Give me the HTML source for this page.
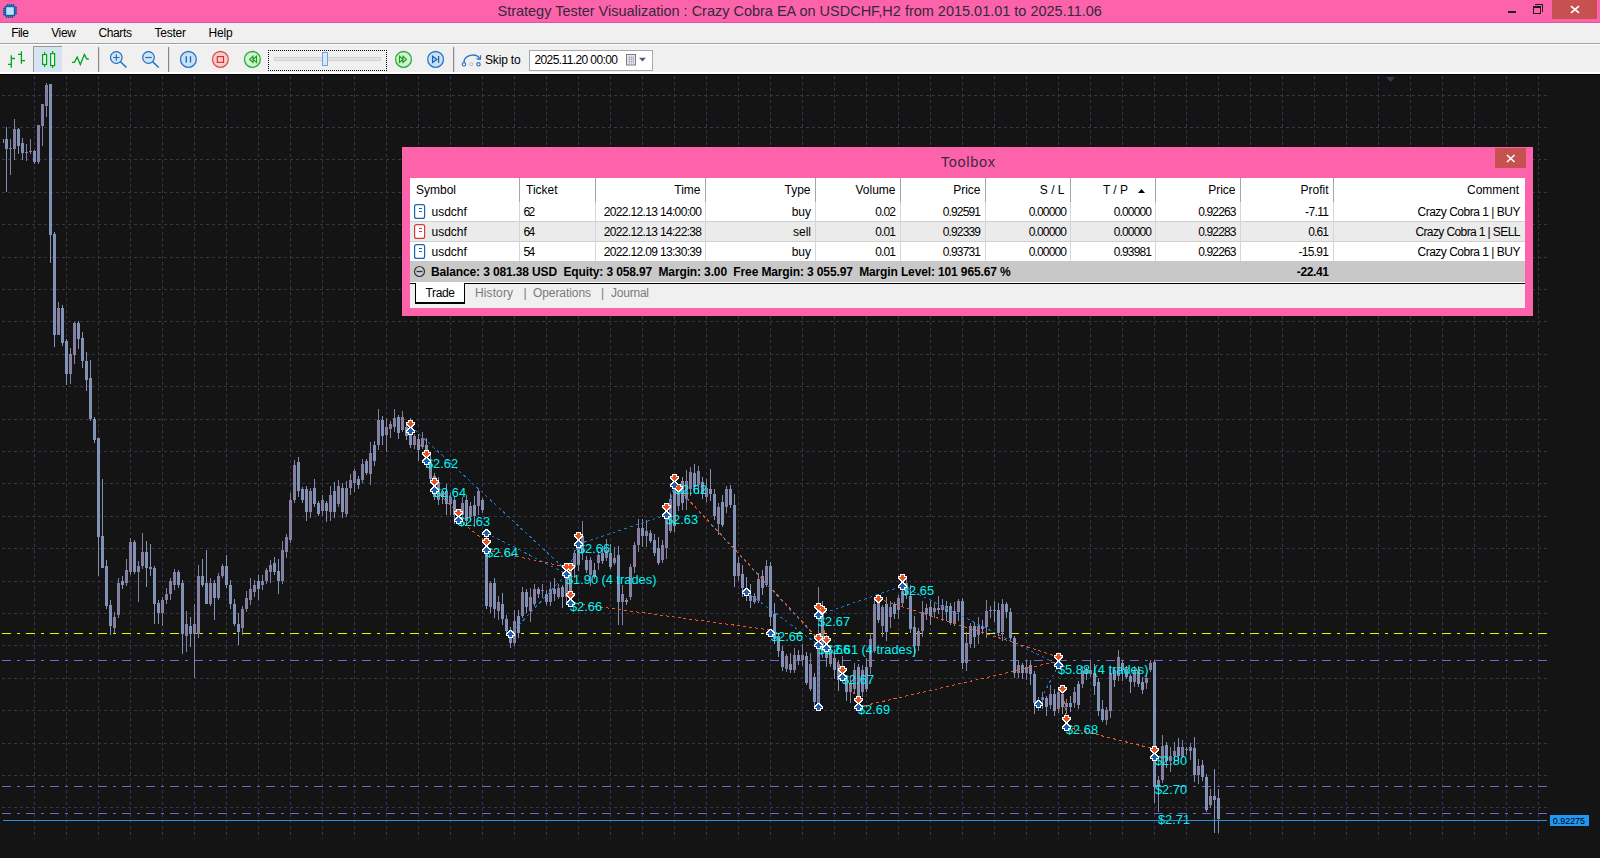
<!DOCTYPE html>
<html><head><meta charset="utf-8">
<style>
*{box-sizing:border-box}
html,body{margin:0;padding:0;width:1600px;height:858px;overflow:hidden;background:#141414;font-family:"Liberation Sans",sans-serif}
.abs{position:absolute}
.tx{position:absolute;white-space:pre;line-height:1}
#title{left:0;top:0;width:1600px;height:23px;background:#fd63ab;border-bottom:1px solid #d9579a}
#menu{left:0;top:23px;width:1600px;height:21px;background:#f0f0f0;border-bottom:1px solid #a0a0a0}
#tb{left:0;top:44px;width:1600px;height:28px;background:#f0f0f0;border-top:1px solid #fff}
#chartedge{left:0;top:72px;width:1600px;height:2px;background:#fff}
#chartline{left:0;top:74px;width:1600px;height:1px;background:#000}
#chart{left:0;top:75px;width:1600px;height:783px;background:#141414}
#box{left:402px;top:147px;width:1131px;height:169px;background:#fd63ab}
#panel{left:410px;top:178px;width:1115px;height:130px;background:#fff}
</style></head><body>
<div id="title" class="abs"></div>
<div id="menu" class="abs"></div>
<div id="tb" class="abs"></div>
<div id="chartedge" class="abs"></div>
<div id="chartline" class="abs"></div>
<div id="chart" class="abs"><svg width="1600" height="783" viewBox="0 0 1600 783" style="display:block"><g stroke="#37334d" stroke-width="1" stroke-dasharray="3 3"><line x1="34.5" y1="1" x2="34.5" y2="764"/><line x1="66.5" y1="1" x2="66.5" y2="764"/><line x1="98.5" y1="1" x2="98.5" y2="764"/><line x1="130.5" y1="1" x2="130.5" y2="764"/><line x1="162.5" y1="1" x2="162.5" y2="764"/><line x1="194.5" y1="1" x2="194.5" y2="764"/><line x1="226.5" y1="1" x2="226.5" y2="764"/><line x1="258.5" y1="1" x2="258.5" y2="764"/><line x1="290.5" y1="1" x2="290.5" y2="764"/><line x1="322.5" y1="1" x2="322.5" y2="764"/><line x1="354.5" y1="1" x2="354.5" y2="764"/><line x1="386.5" y1="1" x2="386.5" y2="764"/><line x1="418.5" y1="1" x2="418.5" y2="764"/><line x1="450.5" y1="1" x2="450.5" y2="764"/><line x1="482.5" y1="1" x2="482.5" y2="764"/><line x1="514.5" y1="1" x2="514.5" y2="764"/><line x1="546.5" y1="1" x2="546.5" y2="764"/><line x1="578.5" y1="1" x2="578.5" y2="764"/><line x1="610.5" y1="1" x2="610.5" y2="764"/><line x1="642.5" y1="1" x2="642.5" y2="764"/><line x1="674.5" y1="1" x2="674.5" y2="764"/><line x1="706.5" y1="1" x2="706.5" y2="764"/><line x1="738.5" y1="1" x2="738.5" y2="764"/><line x1="770.5" y1="1" x2="770.5" y2="764"/><line x1="802.5" y1="1" x2="802.5" y2="764"/><line x1="834.5" y1="1" x2="834.5" y2="764"/><line x1="866.5" y1="1" x2="866.5" y2="764"/><line x1="898.5" y1="1" x2="898.5" y2="764"/><line x1="930.5" y1="1" x2="930.5" y2="764"/><line x1="962.5" y1="1" x2="962.5" y2="764"/><line x1="994.5" y1="1" x2="994.5" y2="764"/><line x1="1026.5" y1="1" x2="1026.5" y2="764"/><line x1="1058.5" y1="1" x2="1058.5" y2="764"/><line x1="1090.5" y1="1" x2="1090.5" y2="764"/><line x1="1122.5" y1="1" x2="1122.5" y2="764"/><line x1="1154.5" y1="1" x2="1154.5" y2="764"/><line x1="1186.5" y1="1" x2="1186.5" y2="764"/><line x1="1218.5" y1="1" x2="1218.5" y2="764"/><line x1="1250.5" y1="1" x2="1250.5" y2="764"/><line x1="1282.5" y1="1" x2="1282.5" y2="764"/><line x1="1314.5" y1="1" x2="1314.5" y2="764"/><line x1="1346.5" y1="1" x2="1346.5" y2="764"/><line x1="1378.5" y1="1" x2="1378.5" y2="764"/><line x1="1410.5" y1="1" x2="1410.5" y2="764"/><line x1="1442.5" y1="1" x2="1442.5" y2="764"/><line x1="1474.5" y1="1" x2="1474.5" y2="764"/><line x1="1506.5" y1="1" x2="1506.5" y2="764"/><line x1="1538.5" y1="1" x2="1538.5" y2="764"/><line x1="2" y1="20.5" x2="1548" y2="20.5"/><line x1="2" y1="52.5" x2="1548" y2="52.5"/><line x1="2" y1="84.5" x2="1548" y2="84.5"/><line x1="2" y1="117.5" x2="1548" y2="117.5"/><line x1="2" y1="149.5" x2="1548" y2="149.5"/><line x1="2" y1="182.5" x2="1548" y2="182.5"/><line x1="2" y1="214.5" x2="1548" y2="214.5"/><line x1="2" y1="246.5" x2="1548" y2="246.5"/><line x1="2" y1="279.5" x2="1548" y2="279.5"/><line x1="2" y1="311.5" x2="1548" y2="311.5"/><line x1="2" y1="344.5" x2="1548" y2="344.5"/><line x1="2" y1="376.5" x2="1548" y2="376.5"/><line x1="2" y1="408.5" x2="1548" y2="408.5"/><line x1="2" y1="441.5" x2="1548" y2="441.5"/><line x1="2" y1="473.5" x2="1548" y2="473.5"/><line x1="2" y1="506.5" x2="1548" y2="506.5"/><line x1="2" y1="538.5" x2="1548" y2="538.5"/><line x1="2" y1="570.5" x2="1548" y2="570.5"/><line x1="2" y1="603.5" x2="1548" y2="603.5"/><line x1="2" y1="635.5" x2="1548" y2="635.5"/><line x1="2" y1="668.5" x2="1548" y2="668.5"/><line x1="2" y1="700.5" x2="1548" y2="700.5"/><line x1="2" y1="732.5" x2="1548" y2="732.5"/></g><g stroke-width="1" stroke-dasharray="9 6 3 6"><line x1="2" y1="558.5" x2="1548" y2="558.5" stroke="#f0f000"/><line x1="2" y1="585.5" x2="1548" y2="585.5" stroke="#7462d6"/><line x1="2" y1="711.5" x2="1548" y2="711.5" stroke="#7462d6"/><line x1="2" y1="738.5" x2="1548" y2="738.5" stroke="#7462d6"/></g><defs><clipPath id="cc"><rect x="3" y="0" width="1545" height="783"/></clipPath></defs><g clip-path="url(#cc)"><g fill="#857fa2"><rect x="10" y="64" width="1" height="36"/><rect x="9" y="73" width="3" height="1"/><rect x="14" y="44" width="1" height="41"/><rect x="13" y="54" width="3" height="20"/><rect x="26" y="69" width="1" height="17"/><rect x="25" y="77" width="3" height="1"/><rect x="30" y="64" width="1" height="15"/><rect x="29" y="76" width="3" height="1"/><rect x="38" y="50" width="1" height="39"/><rect x="37" y="50" width="3" height="37"/><rect x="42" y="29" width="1" height="42"/><rect x="41" y="29" width="3" height="22"/><rect x="46" y="8" width="1" height="34"/><rect x="45" y="10" width="3" height="21"/><rect x="58" y="227" width="1" height="33"/><rect x="57" y="233" width="3" height="27"/><rect x="70" y="273" width="1" height="36"/><rect x="69" y="279" width="3" height="20"/><rect x="74" y="247" width="1" height="42"/><rect x="73" y="248" width="3" height="32"/><rect x="114" y="537" width="1" height="21"/><rect x="113" y="542" width="3" height="11"/><rect x="118" y="503" width="1" height="40"/><rect x="117" y="508" width="3" height="32"/><rect x="126" y="484" width="1" height="27"/><rect x="125" y="495" width="3" height="13"/><rect x="130" y="463" width="1" height="37"/><rect x="129" y="467" width="3" height="30"/><rect x="138" y="486" width="1" height="41"/><rect x="137" y="491" width="3" height="6"/><rect x="142" y="458" width="1" height="36"/><rect x="141" y="477" width="3" height="14"/><rect x="162" y="522" width="1" height="29"/><rect x="161" y="525" width="3" height="13"/><rect x="166" y="513" width="1" height="16"/><rect x="165" y="519" width="3" height="6"/><rect x="170" y="503" width="1" height="22"/><rect x="169" y="506" width="3" height="13"/><rect x="174" y="494" width="1" height="21"/><rect x="173" y="497" width="3" height="13"/><rect x="186" y="536" width="1" height="41"/><rect x="185" y="549" width="3" height="12"/><rect x="194" y="529" width="1" height="74"/><rect x="193" y="549" width="3" height="10"/><rect x="198" y="490" width="1" height="73"/><rect x="197" y="501" width="3" height="58"/><rect x="210" y="503" width="1" height="28"/><rect x="209" y="508" width="3" height="21"/><rect x="218" y="498" width="1" height="27"/><rect x="217" y="501" width="3" height="22"/><rect x="222" y="489" width="1" height="14"/><rect x="221" y="491" width="3" height="10"/><rect x="242" y="531" width="1" height="29"/><rect x="241" y="534" width="3" height="19"/><rect x="246" y="516" width="1" height="21"/><rect x="245" y="523" width="3" height="11"/><rect x="250" y="503" width="1" height="27"/><rect x="249" y="514" width="3" height="11"/><rect x="254" y="505" width="1" height="17"/><rect x="253" y="510" width="3" height="7"/><rect x="262" y="500" width="1" height="15"/><rect x="261" y="506" width="3" height="4"/><rect x="266" y="493" width="1" height="16"/><rect x="265" y="495" width="3" height="11"/><rect x="270" y="485" width="1" height="23"/><rect x="269" y="490" width="3" height="7"/><rect x="282" y="466" width="1" height="43"/><rect x="281" y="475" width="3" height="31"/><rect x="286" y="459" width="1" height="24"/><rect x="285" y="462" width="3" height="15"/><rect x="290" y="418" width="1" height="50"/><rect x="289" y="425" width="3" height="40"/><rect x="294" y="385" width="1" height="43"/><rect x="293" y="390" width="3" height="35"/><rect x="310" y="413" width="1" height="30"/><rect x="309" y="416" width="3" height="21"/><rect x="322" y="420" width="1" height="21"/><rect x="321" y="425" width="3" height="11"/><rect x="330" y="411" width="1" height="35"/><rect x="329" y="420" width="3" height="17"/><rect x="338" y="405" width="1" height="27"/><rect x="337" y="411" width="3" height="18"/><rect x="346" y="406" width="1" height="36"/><rect x="345" y="413" width="3" height="26"/><rect x="350" y="399" width="1" height="21"/><rect x="349" y="405" width="3" height="8"/><rect x="354" y="394" width="1" height="23"/><rect x="353" y="396" width="3" height="12"/><rect x="362" y="384" width="1" height="24"/><rect x="361" y="389" width="3" height="16"/><rect x="370" y="367" width="1" height="43"/><rect x="369" y="378" width="3" height="21"/><rect x="378" y="334" width="1" height="41"/><rect x="377" y="345" width="3" height="25"/><rect x="386" y="343" width="1" height="34"/><rect x="385" y="352" width="3" height="8"/><rect x="390" y="346" width="1" height="17"/><rect x="389" y="349" width="3" height="5"/><rect x="394" y="334" width="1" height="23"/><rect x="393" y="343" width="3" height="9"/><rect x="402" y="336" width="1" height="21"/><rect x="401" y="342" width="3" height="13"/><rect x="414" y="359" width="1" height="15"/><rect x="413" y="361" width="3" height="9"/><rect x="422" y="357" width="1" height="17"/><rect x="421" y="363" width="3" height="9"/><rect x="438" y="402" width="1" height="28"/><rect x="437" y="407" width="3" height="18"/><rect x="450" y="418" width="1" height="22"/><rect x="449" y="422" width="3" height="7"/><rect x="462" y="422" width="1" height="23"/><rect x="461" y="428" width="3" height="12"/><rect x="470" y="427" width="1" height="20"/><rect x="469" y="431" width="3" height="11"/><rect x="478" y="413" width="1" height="27"/><rect x="477" y="416" width="3" height="15"/><rect x="490" y="506" width="1" height="32"/><rect x="489" y="508" width="3" height="24"/><rect x="498" y="521" width="1" height="24"/><rect x="497" y="527" width="3" height="9"/><rect x="514" y="535" width="1" height="36"/><rect x="513" y="546" width="3" height="22"/><rect x="522" y="512" width="1" height="31"/><rect x="521" y="517" width="3" height="24"/><rect x="530" y="513" width="1" height="34"/><rect x="529" y="522" width="3" height="14"/><rect x="534" y="509" width="1" height="22"/><rect x="533" y="514" width="3" height="15"/><rect x="542" y="509" width="1" height="14"/><rect x="541" y="515" width="3" height="1"/><rect x="550" y="507" width="1" height="24"/><rect x="549" y="514" width="3" height="13"/><rect x="558" y="509" width="1" height="15"/><rect x="557" y="513" width="3" height="9"/><rect x="566" y="492" width="1" height="36"/><rect x="565" y="499" width="3" height="23"/><rect x="574" y="475" width="1" height="28"/><rect x="573" y="478" width="3" height="14"/><rect x="582" y="446" width="1" height="39"/><rect x="581" y="461" width="3" height="17"/><rect x="590" y="482" width="1" height="29"/><rect x="589" y="485" width="3" height="15"/><rect x="598" y="476" width="1" height="19"/><rect x="597" y="480" width="3" height="8"/><rect x="606" y="464" width="1" height="22"/><rect x="605" y="475" width="3" height="8"/><rect x="614" y="472" width="1" height="18"/><rect x="613" y="483" width="3" height="5"/><rect x="622" y="510" width="1" height="40"/><rect x="621" y="519" width="3" height="8"/><rect x="630" y="489" width="1" height="36"/><rect x="629" y="492" width="3" height="30"/><rect x="634" y="467" width="1" height="31"/><rect x="633" y="470" width="3" height="22"/><rect x="638" y="444" width="1" height="33"/><rect x="637" y="453" width="3" height="17"/><rect x="646" y="445" width="1" height="27"/><rect x="645" y="456" width="3" height="5"/><rect x="662" y="465" width="1" height="23"/><rect x="661" y="470" width="3" height="15"/><rect x="666" y="430" width="1" height="54"/><rect x="665" y="441" width="3" height="32"/><rect x="670" y="418" width="1" height="40"/><rect x="669" y="424" width="3" height="32"/><rect x="678" y="410" width="1" height="26"/><rect x="677" y="414" width="3" height="17"/><rect x="686" y="395" width="1" height="40"/><rect x="685" y="406" width="3" height="18"/><rect x="690" y="392" width="1" height="29"/><rect x="689" y="397" width="3" height="17"/><rect x="698" y="391" width="1" height="28"/><rect x="697" y="396" width="3" height="14"/><rect x="706" y="404" width="1" height="23"/><rect x="705" y="413" width="3" height="9"/><rect x="718" y="428" width="1" height="32"/><rect x="717" y="432" width="3" height="17"/><rect x="726" y="411" width="1" height="27"/><rect x="725" y="414" width="3" height="18"/><rect x="738" y="482" width="1" height="24"/><rect x="737" y="488" width="3" height="13"/><rect x="754" y="518" width="1" height="11"/><rect x="753" y="521" width="3" height="6"/><rect x="758" y="498" width="1" height="30"/><rect x="757" y="504" width="3" height="22"/><rect x="766" y="485" width="1" height="27"/><rect x="765" y="491" width="3" height="19"/><rect x="786" y="579" width="1" height="18"/><rect x="785" y="581" width="3" height="13"/><rect x="794" y="573" width="1" height="25"/><rect x="793" y="580" width="3" height="15"/><rect x="802" y="569" width="1" height="22"/><rect x="801" y="580" width="3" height="5"/><rect x="810" y="578" width="1" height="38"/><rect x="809" y="589" width="3" height="25"/><rect x="818" y="512" width="1" height="121"/><rect x="817" y="567" width="3" height="63"/><rect x="822" y="526" width="1" height="57"/><rect x="821" y="532" width="3" height="44"/><rect x="830" y="571" width="1" height="21"/><rect x="829" y="576" width="3" height="13"/><rect x="842" y="581" width="1" height="26"/><rect x="841" y="592" width="3" height="10"/><rect x="850" y="601" width="1" height="27"/><rect x="849" y="608" width="3" height="9"/><rect x="854" y="588" width="1" height="31"/><rect x="853" y="595" width="3" height="19"/><rect x="862" y="590" width="1" height="32"/><rect x="861" y="595" width="3" height="22"/><rect x="870" y="558" width="1" height="41"/><rect x="869" y="564" width="3" height="28"/><rect x="874" y="523" width="1" height="55"/><rect x="873" y="529" width="3" height="47"/><rect x="882" y="530" width="1" height="32"/><rect x="881" y="532" width="3" height="19"/><rect x="890" y="526" width="1" height="27"/><rect x="889" y="532" width="3" height="10"/><rect x="898" y="520" width="1" height="24"/><rect x="897" y="523" width="3" height="12"/><rect x="902" y="514" width="1" height="18"/><rect x="901" y="516" width="3" height="12"/><rect x="906" y="501" width="1" height="23"/><rect x="905" y="508" width="3" height="12"/><rect x="918" y="553" width="1" height="23"/><rect x="917" y="556" width="3" height="15"/><rect x="922" y="526" width="1" height="36"/><rect x="921" y="537" width="3" height="19"/><rect x="926" y="529" width="1" height="16"/><rect x="925" y="533" width="3" height="6"/><rect x="934" y="528" width="1" height="15"/><rect x="933" y="533" width="3" height="4"/><rect x="942" y="524" width="1" height="22"/><rect x="941" y="530" width="3" height="5"/><rect x="954" y="527" width="1" height="24"/><rect x="953" y="536" width="3" height="13"/><rect x="958" y="524" width="1" height="22"/><rect x="957" y="526" width="3" height="11"/><rect x="966" y="557" width="1" height="39"/><rect x="965" y="568" width="3" height="20"/><rect x="970" y="548" width="1" height="25"/><rect x="969" y="551" width="3" height="18"/><rect x="978" y="542" width="1" height="27"/><rect x="977" y="551" width="3" height="9"/><rect x="986" y="525" width="1" height="38"/><rect x="985" y="536" width="3" height="16"/><rect x="990" y="531" width="1" height="12"/><rect x="989" y="535" width="3" height="1"/><rect x="1002" y="524" width="1" height="42"/><rect x="1001" y="529" width="3" height="28"/><rect x="1018" y="586" width="1" height="17"/><rect x="1017" y="590" width="3" height="8"/><rect x="1026" y="585" width="1" height="20"/><rect x="1025" y="592" width="3" height="6"/><rect x="1038" y="622" width="1" height="14"/><rect x="1037" y="625" width="3" height="5"/><rect x="1042" y="617" width="1" height="17"/><rect x="1041" y="622" width="3" height="3"/><rect x="1050" y="610" width="1" height="24"/><rect x="1049" y="619" width="3" height="11"/><rect x="1058" y="612" width="1" height="26"/><rect x="1057" y="617" width="3" height="17"/><rect x="1066" y="624" width="1" height="15"/><rect x="1065" y="628" width="3" height="4"/><rect x="1074" y="612" width="1" height="21"/><rect x="1073" y="617" width="3" height="11"/><rect x="1082" y="591" width="1" height="22"/><rect x="1081" y="596" width="3" height="13"/><rect x="1090" y="586" width="1" height="16"/><rect x="1089" y="595" width="3" height="4"/><rect x="1106" y="632" width="1" height="18"/><rect x="1105" y="635" width="3" height="10"/><rect x="1110" y="591" width="1" height="52"/><rect x="1109" y="598" width="3" height="38"/><rect x="1118" y="575" width="1" height="31"/><rect x="1117" y="582" width="3" height="19"/><rect x="1134" y="591" width="1" height="21"/><rect x="1133" y="595" width="3" height="12"/><rect x="1146" y="599" width="1" height="15"/><rect x="1145" y="603" width="3" height="5"/><rect x="1150" y="585" width="1" height="12"/><rect x="1149" y="588" width="3" height="7"/><rect x="1158" y="701" width="1" height="36"/><rect x="1157" y="705" width="3" height="7"/><rect x="1162" y="660" width="1" height="48"/><rect x="1161" y="671" width="3" height="34"/><rect x="1170" y="672" width="1" height="25"/><rect x="1169" y="681" width="3" height="5"/><rect x="1174" y="667" width="1" height="21"/><rect x="1173" y="676" width="3" height="5"/><rect x="1182" y="665" width="1" height="18"/><rect x="1181" y="672" width="3" height="9"/><rect x="1190" y="668" width="1" height="17"/><rect x="1189" y="672" width="3" height="4"/><rect x="1198" y="684" width="1" height="25"/><rect x="1197" y="691" width="3" height="9"/><rect x="1210" y="714" width="1" height="19"/><rect x="1209" y="721" width="3" height="9"/></g><g fill="#8292b6"><rect x="2" y="64" width="1" height="4"/><rect x="1" y="64" width="3" height="4"/><rect x="6" y="52" width="1" height="65"/><rect x="5" y="64" width="3" height="10"/><rect x="18" y="53" width="1" height="26"/><rect x="17" y="54" width="3" height="17"/><rect x="22" y="63" width="1" height="22"/><rect x="21" y="68" width="3" height="10"/><rect x="34" y="75" width="1" height="14"/><rect x="33" y="76" width="3" height="11"/><rect x="50" y="9" width="1" height="179"/><rect x="49" y="9" width="3" height="151"/><rect x="54" y="157" width="1" height="115"/><rect x="53" y="159" width="3" height="101"/><rect x="62" y="230" width="1" height="41"/><rect x="61" y="233" width="3" height="35"/><rect x="66" y="264" width="1" height="46"/><rect x="65" y="266" width="3" height="33"/><rect x="78" y="246" width="1" height="28"/><rect x="77" y="248" width="3" height="16"/><rect x="82" y="257" width="1" height="36"/><rect x="81" y="263" width="3" height="23"/><rect x="86" y="277" width="1" height="39"/><rect x="85" y="286" width="3" height="19"/><rect x="90" y="285" width="1" height="61"/><rect x="89" y="303" width="3" height="41"/><rect x="94" y="342" width="1" height="26"/><rect x="93" y="344" width="3" height="21"/><rect x="98" y="363" width="1" height="138"/><rect x="97" y="363" width="3" height="99"/><rect x="102" y="404" width="1" height="89"/><rect x="101" y="461" width="3" height="32"/><rect x="106" y="485" width="1" height="49"/><rect x="105" y="491" width="3" height="40"/><rect x="110" y="525" width="1" height="35"/><rect x="109" y="530" width="3" height="21"/><rect x="122" y="501" width="1" height="13"/><rect x="121" y="506" width="3" height="4"/><rect x="134" y="465" width="1" height="34"/><rect x="133" y="467" width="3" height="30"/><rect x="146" y="466" width="1" height="46"/><rect x="145" y="477" width="3" height="16"/><rect x="150" y="469" width="1" height="32"/><rect x="149" y="492" width="3" height="2"/><rect x="154" y="491" width="1" height="58"/><rect x="153" y="493" width="3" height="36"/><rect x="158" y="525" width="1" height="24"/><rect x="157" y="528" width="3" height="10"/><rect x="178" y="495" width="1" height="18"/><rect x="177" y="497" width="3" height="13"/><rect x="182" y="505" width="1" height="74"/><rect x="181" y="508" width="3" height="51"/><rect x="190" y="542" width="1" height="30"/><rect x="189" y="551" width="3" height="8"/><rect x="202" y="484" width="1" height="28"/><rect x="201" y="501" width="3" height="9"/><rect x="206" y="475" width="1" height="54"/><rect x="205" y="508" width="3" height="21"/><rect x="214" y="505" width="1" height="40"/><rect x="213" y="508" width="3" height="15"/><rect x="226" y="480" width="1" height="33"/><rect x="225" y="491" width="3" height="19"/><rect x="230" y="505" width="1" height="29"/><rect x="229" y="510" width="3" height="19"/><rect x="234" y="524" width="1" height="27"/><rect x="233" y="529" width="3" height="20"/><rect x="238" y="538" width="1" height="32"/><rect x="237" y="549" width="3" height="8"/><rect x="258" y="500" width="1" height="25"/><rect x="257" y="506" width="3" height="8"/><rect x="274" y="482" width="1" height="18"/><rect x="273" y="488" width="3" height="9"/><rect x="278" y="484" width="1" height="35"/><rect x="277" y="496" width="3" height="10"/><rect x="298" y="382" width="1" height="40"/><rect x="297" y="387" width="3" height="29"/><rect x="302" y="412" width="1" height="16"/><rect x="301" y="414" width="3" height="11"/><rect x="306" y="411" width="1" height="35"/><rect x="305" y="414" width="3" height="23"/><rect x="314" y="404" width="1" height="28"/><rect x="313" y="413" width="3" height="16"/><rect x="318" y="426" width="1" height="15"/><rect x="317" y="428" width="3" height="11"/><rect x="326" y="426" width="1" height="21"/><rect x="325" y="428" width="3" height="8"/><rect x="334" y="407" width="1" height="36"/><rect x="333" y="416" width="3" height="21"/><rect x="342" y="408" width="1" height="35"/><rect x="341" y="413" width="3" height="24"/><rect x="358" y="401" width="1" height="13"/><rect x="357" y="404" width="3" height="6"/><rect x="366" y="384" width="1" height="16"/><rect x="365" y="386" width="3" height="12"/><rect x="374" y="366" width="1" height="25"/><rect x="373" y="370" width="3" height="16"/><rect x="382" y="341" width="1" height="29"/><rect x="381" y="345" width="3" height="16"/><rect x="398" y="340" width="1" height="24"/><rect x="397" y="342" width="3" height="16"/><rect x="406" y="347" width="1" height="18"/><rect x="405" y="352" width="3" height="9"/><rect x="410" y="343" width="1" height="30"/><rect x="409" y="352" width="3" height="18"/><rect x="418" y="359" width="1" height="27"/><rect x="417" y="364" width="3" height="11"/><rect x="426" y="363" width="1" height="30"/><rect x="425" y="370" width="3" height="17"/><rect x="430" y="378" width="1" height="29"/><rect x="429" y="387" width="3" height="17"/><rect x="434" y="398" width="1" height="27"/><rect x="433" y="401" width="3" height="21"/><rect x="442" y="414" width="1" height="15"/><rect x="441" y="416" width="3" height="6"/><rect x="446" y="409" width="1" height="31"/><rect x="445" y="416" width="3" height="13"/><rect x="454" y="421" width="1" height="28"/><rect x="453" y="425" width="3" height="15"/><rect x="458" y="436" width="1" height="14"/><rect x="457" y="440" width="3" height="6"/><rect x="466" y="420" width="1" height="31"/><rect x="465" y="425" width="3" height="21"/><rect x="474" y="421" width="1" height="31"/><rect x="473" y="430" width="3" height="11"/><rect x="482" y="423" width="1" height="15"/><rect x="481" y="425" width="3" height="10"/><rect x="486" y="458" width="1" height="76"/><rect x="485" y="476" width="3" height="55"/><rect x="494" y="503" width="1" height="40"/><rect x="493" y="508" width="3" height="26"/><rect x="502" y="518" width="1" height="32"/><rect x="501" y="529" width="3" height="15"/><rect x="506" y="540" width="1" height="19"/><rect x="505" y="544" width="3" height="12"/><rect x="510" y="552" width="1" height="21"/><rect x="509" y="556" width="3" height="12"/><rect x="518" y="535" width="1" height="28"/><rect x="517" y="541" width="3" height="17"/><rect x="526" y="514" width="1" height="24"/><rect x="525" y="517" width="3" height="15"/><rect x="538" y="512" width="1" height="11"/><rect x="537" y="514" width="3" height="5"/><rect x="546" y="515" width="1" height="15"/><rect x="545" y="519" width="3" height="8"/><rect x="554" y="503" width="1" height="23"/><rect x="553" y="514" width="3" height="5"/><rect x="562" y="510" width="1" height="23"/><rect x="561" y="512" width="3" height="10"/><rect x="570" y="488" width="1" height="33"/><rect x="569" y="490" width="3" height="29"/><rect x="578" y="465" width="1" height="31"/><rect x="577" y="468" width="3" height="22"/><rect x="586" y="481" width="1" height="17"/><rect x="585" y="485" width="3" height="10"/><rect x="594" y="488" width="1" height="16"/><rect x="593" y="495" width="3" height="7"/><rect x="602" y="471" width="1" height="18"/><rect x="601" y="478" width="3" height="8"/><rect x="610" y="469" width="1" height="25"/><rect x="609" y="478" width="3" height="14"/><rect x="618" y="471" width="1" height="79"/><rect x="617" y="480" width="3" height="47"/><rect x="626" y="523" width="1" height="7"/><rect x="625" y="525" width="3" height="2"/><rect x="642" y="444" width="1" height="28"/><rect x="641" y="453" width="3" height="8"/><rect x="650" y="455" width="1" height="13"/><rect x="649" y="458" width="3" height="8"/><rect x="654" y="459" width="1" height="22"/><rect x="653" y="465" width="3" height="13"/><rect x="658" y="462" width="1" height="28"/><rect x="657" y="473" width="3" height="15"/><rect x="674" y="402" width="1" height="55"/><rect x="673" y="409" width="3" height="42"/><rect x="682" y="402" width="1" height="33"/><rect x="681" y="406" width="3" height="22"/><rect x="694" y="389" width="1" height="29"/><rect x="693" y="398" width="3" height="14"/><rect x="702" y="402" width="1" height="22"/><rect x="701" y="407" width="3" height="12"/><rect x="710" y="394" width="1" height="32"/><rect x="709" y="414" width="3" height="5"/><rect x="714" y="414" width="1" height="31"/><rect x="713" y="419" width="3" height="22"/><rect x="722" y="420" width="1" height="32"/><rect x="721" y="427" width="3" height="23"/><rect x="730" y="410" width="1" height="23"/><rect x="729" y="414" width="3" height="16"/><rect x="734" y="419" width="1" height="93"/><rect x="733" y="430" width="3" height="71"/><rect x="742" y="490" width="1" height="32"/><rect x="741" y="499" width="3" height="14"/><rect x="746" y="502" width="1" height="24"/><rect x="745" y="513" width="3" height="6"/><rect x="750" y="509" width="1" height="24"/><rect x="749" y="520" width="3" height="6"/><rect x="762" y="495" width="1" height="25"/><rect x="761" y="501" width="3" height="12"/><rect x="770" y="487" width="1" height="64"/><rect x="769" y="491" width="3" height="51"/><rect x="774" y="528" width="1" height="41"/><rect x="773" y="539" width="3" height="25"/><rect x="778" y="559" width="1" height="23"/><rect x="777" y="561" width="3" height="15"/><rect x="782" y="571" width="1" height="25"/><rect x="781" y="576" width="3" height="16"/><rect x="790" y="578" width="1" height="20"/><rect x="789" y="589" width="3" height="6"/><rect x="798" y="575" width="1" height="15"/><rect x="797" y="580" width="3" height="5"/><rect x="806" y="577" width="1" height="33"/><rect x="805" y="581" width="3" height="27"/><rect x="814" y="598" width="1" height="34"/><rect x="813" y="602" width="3" height="25"/><rect x="826" y="560" width="1" height="32"/><rect x="825" y="564" width="3" height="19"/><rect x="834" y="574" width="1" height="30"/><rect x="833" y="583" width="3" height="12"/><rect x="838" y="585" width="1" height="31"/><rect x="837" y="589" width="3" height="16"/><rect x="846" y="600" width="1" height="26"/><rect x="845" y="602" width="3" height="15"/><rect x="858" y="589" width="1" height="41"/><rect x="857" y="592" width="3" height="35"/><rect x="866" y="583" width="1" height="34"/><rect x="865" y="592" width="3" height="22"/><rect x="878" y="519" width="1" height="29"/><rect x="877" y="526" width="3" height="19"/><rect x="886" y="522" width="1" height="44"/><rect x="885" y="529" width="3" height="28"/><rect x="894" y="527" width="1" height="17"/><rect x="893" y="529" width="3" height="10"/><rect x="910" y="510" width="1" height="48"/><rect x="909" y="521" width="3" height="33"/><rect x="914" y="541" width="1" height="41"/><rect x="913" y="552" width="3" height="19"/><rect x="930" y="526" width="1" height="24"/><rect x="929" y="532" width="3" height="9"/><rect x="938" y="521" width="1" height="18"/><rect x="937" y="533" width="3" height="2"/><rect x="946" y="526" width="1" height="20"/><rect x="945" y="531" width="3" height="6"/><rect x="950" y="528" width="1" height="22"/><rect x="949" y="531" width="3" height="17"/><rect x="962" y="523" width="1" height="71"/><rect x="961" y="526" width="3" height="62"/><rect x="974" y="548" width="1" height="25"/><rect x="973" y="551" width="3" height="11"/><rect x="982" y="545" width="1" height="14"/><rect x="981" y="551" width="3" height="3"/><rect x="994" y="526" width="1" height="21"/><rect x="993" y="535" width="3" height="1"/><rect x="998" y="528" width="1" height="33"/><rect x="997" y="535" width="3" height="23"/><rect x="1006" y="527" width="1" height="16"/><rect x="1005" y="529" width="3" height="8"/><rect x="1010" y="533" width="1" height="32"/><rect x="1009" y="537" width="3" height="26"/><rect x="1014" y="561" width="1" height="42"/><rect x="1013" y="563" width="3" height="35"/><rect x="1022" y="588" width="1" height="16"/><rect x="1021" y="590" width="3" height="8"/><rect x="1030" y="585" width="1" height="25"/><rect x="1029" y="590" width="3" height="9"/><rect x="1034" y="596" width="1" height="43"/><rect x="1033" y="599" width="3" height="29"/><rect x="1046" y="621" width="1" height="20"/><rect x="1045" y="623" width="3" height="9"/><rect x="1054" y="614" width="1" height="27"/><rect x="1053" y="619" width="3" height="17"/><rect x="1062" y="614" width="1" height="25"/><rect x="1061" y="619" width="3" height="13"/><rect x="1070" y="621" width="1" height="16"/><rect x="1069" y="628" width="3" height="4"/><rect x="1078" y="606" width="1" height="28"/><rect x="1077" y="609" width="3" height="21"/><rect x="1086" y="592" width="1" height="13"/><rect x="1085" y="595" width="3" height="4"/><rect x="1094" y="589" width="1" height="31"/><rect x="1093" y="598" width="3" height="13"/><rect x="1098" y="603" width="1" height="38"/><rect x="1097" y="607" width="3" height="29"/><rect x="1102" y="625" width="1" height="22"/><rect x="1101" y="634" width="3" height="11"/><rect x="1114" y="592" width="1" height="20"/><rect x="1113" y="595" width="3" height="10"/><rect x="1122" y="585" width="1" height="21"/><rect x="1121" y="588" width="3" height="7"/><rect x="1126" y="591" width="1" height="13"/><rect x="1125" y="594" width="3" height="8"/><rect x="1130" y="599" width="1" height="19"/><rect x="1129" y="601" width="3" height="6"/><rect x="1138" y="591" width="1" height="21"/><rect x="1137" y="595" width="3" height="14"/><rect x="1142" y="602" width="1" height="17"/><rect x="1141" y="607" width="3" height="8"/><rect x="1154" y="585" width="1" height="143"/><rect x="1153" y="587" width="3" height="125"/><rect x="1166" y="667" width="1" height="26"/><rect x="1165" y="670" width="3" height="16"/><rect x="1178" y="663" width="1" height="23"/><rect x="1177" y="672" width="3" height="9"/><rect x="1186" y="672" width="1" height="8"/><rect x="1185" y="674" width="3" height="1"/><rect x="1194" y="662" width="1" height="45"/><rect x="1193" y="673" width="3" height="27"/><rect x="1202" y="685" width="1" height="21"/><rect x="1201" y="690" width="3" height="12"/><rect x="1206" y="699" width="1" height="38"/><rect x="1205" y="702" width="3" height="33"/><rect x="1214" y="694" width="1" height="64"/><rect x="1213" y="721" width="3" height="4"/><rect x="1218" y="714" width="1" height="44"/><rect x="1217" y="723" width="3" height="21"/></g></g><g stroke-width="1" stroke-dasharray="3 3" fill="none" shape-rendering="crispEdges"><line x1="410.5" y1="351" x2="566.5" y2="495.5" stroke="#1a78d0"/><line x1="486.5" y1="458" x2="566.5" y2="499" stroke="#1a78d0"/><line x1="510.5" y1="559" x2="566.5" y2="499" stroke="#1a78d0"/><line x1="578.5" y1="469" x2="666.5" y2="440" stroke="#1a78d0"/><line x1="666.5" y1="440" x2="674.5" y2="410" stroke="#1a78d0"/><line x1="674.5" y1="410" x2="818.5" y2="565" stroke="#1a78d0"/><line x1="746.5" y1="517" x2="818.5" y2="570" stroke="#1a78d0"/><line x1="818.5" y1="540" x2="902.5" y2="511" stroke="#1a78d0"/><line x1="818.5" y1="540" x2="818.5" y2="632" stroke="#1a78d0"/><line x1="902.5" y1="511" x2="1058.5" y2="590" stroke="#1a78d0"/><line x1="1038.5" y1="629" x2="1058.5" y2="590" stroke="#1a78d0"/><line x1="566.5" y1="498" x2="578.5" y2="469" stroke="#1a78d0"/><line x1="410.5" y1="355" x2="426.5" y2="379" stroke="#e85a28"/><line x1="426.5" y1="386" x2="434.5" y2="407" stroke="#e85a28"/><line x1="434.5" y1="415" x2="458.5" y2="438" stroke="#e85a28"/><line x1="458.5" y1="445" x2="486.5" y2="467" stroke="#e85a28"/><line x1="486.5" y1="475" x2="566.5" y2="492" stroke="#e85a28"/><line x1="570.5" y1="495" x2="570.5" y2="521" stroke="#e85a28"/><line x1="570.5" y1="528" x2="770.5" y2="555" stroke="#e85a28"/><line x1="678.5" y1="414" x2="817.5" y2="563" stroke="#e85a28"/><line x1="818.5" y1="532" x2="826.5" y2="565" stroke="#e85a28"/><line x1="826.5" y1="573" x2="842.5" y2="595" stroke="#e85a28"/><line x1="842.5" y1="602" x2="858.5" y2="625" stroke="#e85a28"/><line x1="858.5" y1="632" x2="1058.5" y2="586" stroke="#e85a28"/><line x1="878.5" y1="524" x2="1058.5" y2="582" stroke="#e85a28"/><line x1="1062.5" y1="614" x2="1066.5" y2="644" stroke="#e85a28"/><line x1="1066.5" y1="652" x2="1154.5" y2="674" stroke="#e85a28"/></g><g fill="#00f5f5" font-size="13.6" font-family="Liberation Sans, sans-serif"><text x="426" y="393" textLength="32.0" lengthAdjust="spacingAndGlyphs">$2.62</text><text x="434" y="422" textLength="32.0" lengthAdjust="spacingAndGlyphs">$2.64</text><text x="458" y="451" textLength="32.0" lengthAdjust="spacingAndGlyphs">$2.63</text><text x="486" y="482" textLength="32.0" lengthAdjust="spacingAndGlyphs">$2.64</text><text x="566" y="509" textLength="90.4" lengthAdjust="spacingAndGlyphs">$1.90 (4 trades)</text><text x="578" y="478" textLength="32.0" lengthAdjust="spacingAndGlyphs">$2.66</text><text x="570" y="536" textLength="32.0" lengthAdjust="spacingAndGlyphs">$2.66</text><text x="675" y="419" textLength="32.0" lengthAdjust="spacingAndGlyphs">$2.62</text><text x="666" y="449" textLength="32.0" lengthAdjust="spacingAndGlyphs">$2.63</text><text x="771" y="566" textLength="32.0" lengthAdjust="spacingAndGlyphs">$2.66</text><text x="818" y="551" textLength="32.0" lengthAdjust="spacingAndGlyphs">$2.67</text><text x="818" y="579" textLength="32.0" lengthAdjust="spacingAndGlyphs">$2.66</text><text x="826" y="579" textLength="90.4" lengthAdjust="spacingAndGlyphs">$2.61 (4 trades)</text><text x="842" y="609" textLength="32.0" lengthAdjust="spacingAndGlyphs">$2.67</text><text x="858" y="639" textLength="32.0" lengthAdjust="spacingAndGlyphs">$2.69</text><text x="902" y="520" textLength="32.0" lengthAdjust="spacingAndGlyphs">$2.65</text><text x="1058" y="599" textLength="90.4" lengthAdjust="spacingAndGlyphs">$5.88 (4 trades)</text><text x="1066" y="659" textLength="32.0" lengthAdjust="spacingAndGlyphs">$2.68</text><text x="1155" y="690" textLength="32.0" lengthAdjust="spacingAndGlyphs">$2.80</text><text x="1155" y="719" textLength="32.0" lengthAdjust="spacingAndGlyphs">$2.70</text><text x="1158" y="749" textLength="32.0" lengthAdjust="spacingAndGlyphs">$2.71</text></g><g shape-rendering="crispEdges"><path fill="#fff" d="M408 345h5v3h-5zM408 346h5v3h-5zM406 347h9v3h-9zM407 348h7v3h-7zM408 349h5v3h-5zM409 350h3v3h-3zM409 352h3v3h-3zM408 353h5v3h-5zM407 354h7v3h-7zM406 355h9v3h-9zM408 356h5v3h-5zM408 357h5v3h-5zM424 375h5v3h-5zM424 376h5v3h-5zM422 377h9v3h-9zM423 378h7v3h-7zM424 379h5v3h-5zM425 380h3v3h-3zM425 382h3v3h-3zM424 383h5v3h-5zM423 384h7v3h-7zM422 385h9v3h-9zM424 386h5v3h-5zM424 387h5v3h-5zM432 403h5v3h-5zM432 404h5v3h-5zM430 405h9v3h-9zM431 406h7v3h-7zM432 407h5v3h-5zM433 408h3v3h-3zM433 411h3v3h-3zM432 412h5v3h-5zM431 413h7v3h-7zM430 414h9v3h-9zM432 415h5v3h-5zM432 416h5v3h-5zM456 434h5v3h-5zM456 435h5v3h-5zM454 436h9v3h-9zM455 437h7v3h-7zM456 438h5v3h-5zM457 439h3v3h-3zM457 441h3v3h-3zM456 442h5v3h-5zM455 443h7v3h-7zM454 444h9v3h-9zM456 445h5v3h-5zM456 446h5v3h-5zM485 454h3v3h-3zM484 455h5v3h-5zM483 456h7v3h-7zM482 457h9v3h-9zM484 458h5v3h-5zM484 459h5v3h-5zM484 463h5v3h-5zM484 464h5v3h-5zM482 465h9v3h-9zM483 466h7v3h-7zM484 467h5v3h-5zM485 468h3v3h-3zM485 471h3v3h-3zM484 472h5v3h-5zM483 473h7v3h-7zM482 474h9v3h-9zM484 475h5v3h-5zM484 476h5v3h-5zM564 488h5v3h-5zM564 489h5v3h-5zM562 490h9v3h-9zM563 491h7v3h-7zM564 492h5v3h-5zM565 493h3v3h-3zM568 488h5v3h-5zM568 489h5v3h-5zM566 490h9v3h-9zM567 491h7v3h-7zM568 492h5v3h-5zM569 493h3v3h-3zM565 495h3v3h-3zM564 496h5v3h-5zM563 497h7v3h-7zM562 498h9v3h-9zM564 499h5v3h-5zM564 500h5v3h-5zM568 516h5v3h-5zM568 517h5v3h-5zM566 518h9v3h-9zM567 519h7v3h-7zM568 520h5v3h-5zM569 521h3v3h-3zM569 524h3v3h-3zM568 525h5v3h-5zM567 526h7v3h-7zM566 527h9v3h-9zM568 528h5v3h-5zM568 529h5v3h-5zM576 457h5v3h-5zM576 458h5v3h-5zM574 459h9v3h-9zM575 460h7v3h-7zM576 461h5v3h-5zM577 462h3v3h-3zM577 465h3v3h-3zM576 466h5v3h-5zM575 467h7v3h-7zM574 468h9v3h-9zM576 469h5v3h-5zM576 470h5v3h-5zM509 555h3v3h-3zM508 556h5v3h-5zM507 557h7v3h-7zM506 558h9v3h-9zM508 559h5v3h-5zM508 560h5v3h-5zM664 428h5v3h-5zM664 429h5v3h-5zM662 430h9v3h-9zM663 431h7v3h-7zM664 432h5v3h-5zM665 433h3v3h-3zM665 436h3v3h-3zM664 437h5v3h-5zM663 438h7v3h-7zM662 439h9v3h-9zM664 440h5v3h-5zM664 441h5v3h-5zM672 399h5v3h-5zM672 400h5v3h-5zM670 401h9v3h-9zM671 402h7v3h-7zM672 403h5v3h-5zM673 404h3v3h-3zM673 406h3v3h-3zM672 407h5v3h-5zM671 408h7v3h-7zM670 409h9v3h-9zM672 410h5v3h-5zM672 411h5v3h-5zM676 409h5v3h-5zM676 410h5v3h-5zM674 411h9v3h-9zM675 412h7v3h-7zM676 413h5v3h-5zM677 414h3v3h-3zM745 513h3v3h-3zM744 514h5v3h-5zM743 515h7v3h-7zM742 516h9v3h-9zM744 517h5v3h-5zM744 518h5v3h-5zM769 554h3v3h-3zM768 555h5v3h-5zM767 556h7v3h-7zM766 557h9v3h-9zM768 558h5v3h-5zM768 559h5v3h-5zM816 528h5v3h-5zM816 529h5v3h-5zM814 530h9v3h-9zM815 531h7v3h-7zM816 532h5v3h-5zM817 533h3v3h-3zM820 531h5v3h-5zM820 532h5v3h-5zM818 533h9v3h-9zM819 534h7v3h-7zM820 535h5v3h-5zM821 536h3v3h-3zM817 536h3v3h-3zM816 537h5v3h-5zM815 538h7v3h-7zM814 539h9v3h-9zM816 540h5v3h-5zM816 541h5v3h-5zM816 559h5v3h-5zM816 560h5v3h-5zM814 561h9v3h-9zM815 562h7v3h-7zM816 563h5v3h-5zM817 564h3v3h-3zM824 561h5v3h-5zM824 562h5v3h-5zM822 563h9v3h-9zM823 564h7v3h-7zM824 565h5v3h-5zM825 566h3v3h-3zM817 566h3v3h-3zM816 567h5v3h-5zM815 568h7v3h-7zM814 569h9v3h-9zM816 570h5v3h-5zM816 571h5v3h-5zM825 569h3v3h-3zM824 570h5v3h-5zM823 571h7v3h-7zM822 572h9v3h-9zM824 573h5v3h-5zM824 574h5v3h-5zM840 591h5v3h-5zM840 592h5v3h-5zM838 593h9v3h-9zM839 594h7v3h-7zM840 595h5v3h-5zM841 596h3v3h-3zM841 598h3v3h-3zM840 599h5v3h-5zM839 600h7v3h-7zM838 601h9v3h-9zM840 602h5v3h-5zM840 603h5v3h-5zM856 621h5v3h-5zM856 622h5v3h-5zM854 623h9v3h-9zM855 624h7v3h-7zM856 625h5v3h-5zM857 626h3v3h-3zM857 628h3v3h-3zM856 629h5v3h-5zM855 630h7v3h-7zM854 631h9v3h-9zM856 632h5v3h-5zM856 633h5v3h-5zM817 628h3v3h-3zM816 629h5v3h-5zM815 630h7v3h-7zM814 631h9v3h-9zM816 632h5v3h-5zM816 633h5v3h-5zM876 520h5v3h-5zM876 521h5v3h-5zM874 522h9v3h-9zM875 523h7v3h-7zM876 524h5v3h-5zM877 525h3v3h-3zM900 499h5v3h-5zM900 500h5v3h-5zM898 501h9v3h-9zM899 502h7v3h-7zM900 503h5v3h-5zM901 504h3v3h-3zM901 507h3v3h-3zM900 508h5v3h-5zM899 509h7v3h-7zM898 510h9v3h-9zM900 511h5v3h-5zM900 512h5v3h-5zM1056 578h5v3h-5zM1056 579h5v3h-5zM1054 580h9v3h-9zM1055 581h7v3h-7zM1056 582h5v3h-5zM1057 583h3v3h-3zM1057 586h3v3h-3zM1056 587h5v3h-5zM1055 588h7v3h-7zM1054 589h9v3h-9zM1056 590h5v3h-5zM1056 591h5v3h-5zM1037 625h3v3h-3zM1036 626h5v3h-5zM1035 627h7v3h-7zM1034 628h9v3h-9zM1036 629h5v3h-5zM1036 630h5v3h-5zM1060 610h5v3h-5zM1060 611h5v3h-5zM1058 612h9v3h-9zM1059 613h7v3h-7zM1060 614h5v3h-5zM1061 615h3v3h-3zM1064 640h5v3h-5zM1064 641h5v3h-5zM1062 642h9v3h-9zM1063 643h7v3h-7zM1064 644h5v3h-5zM1065 645h3v3h-3zM1065 648h3v3h-3zM1064 649h5v3h-5zM1063 650h7v3h-7zM1062 651h9v3h-9zM1064 652h5v3h-5zM1064 653h5v3h-5zM1152 671h5v3h-5zM1152 672h5v3h-5zM1150 673h9v3h-9zM1151 674h7v3h-7zM1152 675h5v3h-5zM1153 676h3v3h-3zM1153 678h3v3h-3zM1152 679h5v3h-5zM1151 680h7v3h-7zM1150 681h9v3h-9zM1152 682h5v3h-5zM1152 683h5v3h-5z"/><path fill="#e8501e" d="M409 346h3v1h-3zM409 347h3v1h-3zM407 348h7v1h-7zM408 349h5v1h-5zM409 350h3v1h-3zM410 351h1v1h-1z"/><path fill="#1a5fb4" d="M410 353h1v1h-1zM409 354h3v1h-3zM408 355h5v1h-5zM407 356h7v1h-7zM409 357h3v1h-3zM409 358h3v1h-3z"/><path fill="#e8501e" d="M425 376h3v1h-3zM425 377h3v1h-3zM423 378h7v1h-7zM424 379h5v1h-5zM425 380h3v1h-3zM426 381h1v1h-1z"/><path fill="#1a5fb4" d="M426 383h1v1h-1zM425 384h3v1h-3zM424 385h5v1h-5zM423 386h7v1h-7zM425 387h3v1h-3zM425 388h3v1h-3z"/><path fill="#e8501e" d="M433 404h3v1h-3zM433 405h3v1h-3zM431 406h7v1h-7zM432 407h5v1h-5zM433 408h3v1h-3zM434 409h1v1h-1z"/><path fill="#1a5fb4" d="M434 412h1v1h-1zM433 413h3v1h-3zM432 414h5v1h-5zM431 415h7v1h-7zM433 416h3v1h-3zM433 417h3v1h-3z"/><path fill="#e8501e" d="M457 435h3v1h-3zM457 436h3v1h-3zM455 437h7v1h-7zM456 438h5v1h-5zM457 439h3v1h-3zM458 440h1v1h-1z"/><path fill="#1a5fb4" d="M458 442h1v1h-1zM457 443h3v1h-3zM456 444h5v1h-5zM455 445h7v1h-7zM457 446h3v1h-3zM457 447h3v1h-3z"/><path fill="#1a5fb4" d="M486 455h1v1h-1zM485 456h3v1h-3zM484 457h5v1h-5zM483 458h7v1h-7zM485 459h3v1h-3zM485 460h3v1h-3z"/><path fill="#e8501e" d="M485 464h3v1h-3zM485 465h3v1h-3zM483 466h7v1h-7zM484 467h5v1h-5zM485 468h3v1h-3zM486 469h1v1h-1z"/><path fill="#1a5fb4" d="M486 472h1v1h-1zM485 473h3v1h-3zM484 474h5v1h-5zM483 475h7v1h-7zM485 476h3v1h-3zM485 477h3v1h-3z"/><path fill="#e8501e" d="M565 489h3v1h-3zM565 490h3v1h-3zM563 491h7v1h-7zM564 492h5v1h-5zM565 493h3v1h-3zM566 494h1v1h-1z"/><path fill="#e8501e" d="M569 489h3v1h-3zM569 490h3v1h-3zM567 491h7v1h-7zM568 492h5v1h-5zM569 493h3v1h-3zM570 494h1v1h-1z"/><path fill="#1a5fb4" d="M566 496h1v1h-1zM565 497h3v1h-3zM564 498h5v1h-5zM563 499h7v1h-7zM565 500h3v1h-3zM565 501h3v1h-3z"/><path fill="#e8501e" d="M569 517h3v1h-3zM569 518h3v1h-3zM567 519h7v1h-7zM568 520h5v1h-5zM569 521h3v1h-3zM570 522h1v1h-1z"/><path fill="#1a5fb4" d="M570 525h1v1h-1zM569 526h3v1h-3zM568 527h5v1h-5zM567 528h7v1h-7zM569 529h3v1h-3zM569 530h3v1h-3z"/><path fill="#e8501e" d="M577 458h3v1h-3zM577 459h3v1h-3zM575 460h7v1h-7zM576 461h5v1h-5zM577 462h3v1h-3zM578 463h1v1h-1z"/><path fill="#1a5fb4" d="M578 466h1v1h-1zM577 467h3v1h-3zM576 468h5v1h-5zM575 469h7v1h-7zM577 470h3v1h-3zM577 471h3v1h-3z"/><path fill="#1a5fb4" d="M510 556h1v1h-1zM509 557h3v1h-3zM508 558h5v1h-5zM507 559h7v1h-7zM509 560h3v1h-3zM509 561h3v1h-3z"/><path fill="#e8501e" d="M665 429h3v1h-3zM665 430h3v1h-3zM663 431h7v1h-7zM664 432h5v1h-5zM665 433h3v1h-3zM666 434h1v1h-1z"/><path fill="#1a5fb4" d="M666 437h1v1h-1zM665 438h3v1h-3zM664 439h5v1h-5zM663 440h7v1h-7zM665 441h3v1h-3zM665 442h3v1h-3z"/><path fill="#e8501e" d="M673 400h3v1h-3zM673 401h3v1h-3zM671 402h7v1h-7zM672 403h5v1h-5zM673 404h3v1h-3zM674 405h1v1h-1z"/><path fill="#1a5fb4" d="M674 407h1v1h-1zM673 408h3v1h-3zM672 409h5v1h-5zM671 410h7v1h-7zM673 411h3v1h-3zM673 412h3v1h-3z"/><path fill="#e8501e" d="M677 410h3v1h-3zM677 411h3v1h-3zM675 412h7v1h-7zM676 413h5v1h-5zM677 414h3v1h-3zM678 415h1v1h-1z"/><path fill="#1a5fb4" d="M746 514h1v1h-1zM745 515h3v1h-3zM744 516h5v1h-5zM743 517h7v1h-7zM745 518h3v1h-3zM745 519h3v1h-3z"/><path fill="#1a5fb4" d="M770 555h1v1h-1zM769 556h3v1h-3zM768 557h5v1h-5zM767 558h7v1h-7zM769 559h3v1h-3zM769 560h3v1h-3z"/><path fill="#e8501e" d="M817 529h3v1h-3zM817 530h3v1h-3zM815 531h7v1h-7zM816 532h5v1h-5zM817 533h3v1h-3zM818 534h1v1h-1z"/><path fill="#e8501e" d="M821 532h3v1h-3zM821 533h3v1h-3zM819 534h7v1h-7zM820 535h5v1h-5zM821 536h3v1h-3zM822 537h1v1h-1z"/><path fill="#1a5fb4" d="M818 537h1v1h-1zM817 538h3v1h-3zM816 539h5v1h-5zM815 540h7v1h-7zM817 541h3v1h-3zM817 542h3v1h-3z"/><path fill="#e8501e" d="M817 560h3v1h-3zM817 561h3v1h-3zM815 562h7v1h-7zM816 563h5v1h-5zM817 564h3v1h-3zM818 565h1v1h-1z"/><path fill="#e8501e" d="M825 562h3v1h-3zM825 563h3v1h-3zM823 564h7v1h-7zM824 565h5v1h-5zM825 566h3v1h-3zM826 567h1v1h-1z"/><path fill="#1a5fb4" d="M818 567h1v1h-1zM817 568h3v1h-3zM816 569h5v1h-5zM815 570h7v1h-7zM817 571h3v1h-3zM817 572h3v1h-3z"/><path fill="#1a5fb4" d="M826 570h1v1h-1zM825 571h3v1h-3zM824 572h5v1h-5zM823 573h7v1h-7zM825 574h3v1h-3zM825 575h3v1h-3z"/><path fill="#e8501e" d="M841 592h3v1h-3zM841 593h3v1h-3zM839 594h7v1h-7zM840 595h5v1h-5zM841 596h3v1h-3zM842 597h1v1h-1z"/><path fill="#1a5fb4" d="M842 599h1v1h-1zM841 600h3v1h-3zM840 601h5v1h-5zM839 602h7v1h-7zM841 603h3v1h-3zM841 604h3v1h-3z"/><path fill="#e8501e" d="M857 622h3v1h-3zM857 623h3v1h-3zM855 624h7v1h-7zM856 625h5v1h-5zM857 626h3v1h-3zM858 627h1v1h-1z"/><path fill="#1a5fb4" d="M858 629h1v1h-1zM857 630h3v1h-3zM856 631h5v1h-5zM855 632h7v1h-7zM857 633h3v1h-3zM857 634h3v1h-3z"/><path fill="#1a5fb4" d="M818 629h1v1h-1zM817 630h3v1h-3zM816 631h5v1h-5zM815 632h7v1h-7zM817 633h3v1h-3zM817 634h3v1h-3z"/><path fill="#e8501e" d="M877 521h3v1h-3zM877 522h3v1h-3zM875 523h7v1h-7zM876 524h5v1h-5zM877 525h3v1h-3zM878 526h1v1h-1z"/><path fill="#e8501e" d="M901 500h3v1h-3zM901 501h3v1h-3zM899 502h7v1h-7zM900 503h5v1h-5zM901 504h3v1h-3zM902 505h1v1h-1z"/><path fill="#1a5fb4" d="M902 508h1v1h-1zM901 509h3v1h-3zM900 510h5v1h-5zM899 511h7v1h-7zM901 512h3v1h-3zM901 513h3v1h-3z"/><path fill="#e8501e" d="M1057 579h3v1h-3zM1057 580h3v1h-3zM1055 581h7v1h-7zM1056 582h5v1h-5zM1057 583h3v1h-3zM1058 584h1v1h-1z"/><path fill="#1a5fb4" d="M1058 587h1v1h-1zM1057 588h3v1h-3zM1056 589h5v1h-5zM1055 590h7v1h-7zM1057 591h3v1h-3zM1057 592h3v1h-3z"/><path fill="#1a5fb4" d="M1038 626h1v1h-1zM1037 627h3v1h-3zM1036 628h5v1h-5zM1035 629h7v1h-7zM1037 630h3v1h-3zM1037 631h3v1h-3z"/><path fill="#e8501e" d="M1061 611h3v1h-3zM1061 612h3v1h-3zM1059 613h7v1h-7zM1060 614h5v1h-5zM1061 615h3v1h-3zM1062 616h1v1h-1z"/><path fill="#e8501e" d="M1065 641h3v1h-3zM1065 642h3v1h-3zM1063 643h7v1h-7zM1064 644h5v1h-5zM1065 645h3v1h-3zM1066 646h1v1h-1z"/><path fill="#1a5fb4" d="M1066 649h1v1h-1zM1065 650h3v1h-3zM1064 651h5v1h-5zM1063 652h7v1h-7zM1065 653h3v1h-3zM1065 654h3v1h-3z"/><path fill="#e8501e" d="M1153 672h3v1h-3zM1153 673h3v1h-3zM1151 674h7v1h-7zM1152 675h5v1h-5zM1153 676h3v1h-3zM1154 677h1v1h-1z"/><path fill="#1a5fb4" d="M1154 679h1v1h-1zM1153 680h3v1h-3zM1152 681h5v1h-5zM1151 682h7v1h-7zM1153 683h3v1h-3zM1153 684h3v1h-3z"/></g><line x1="3" y1="745.5" x2="1547" y2="745.5" stroke="#2a8de0" stroke-width="1"/><rect x="1550" y="740" width="39" height="11" fill="#2196f3"/><text x="1552.8" y="749" font-size="9" textLength="32.2" lengthAdjust="spacingAndGlyphs" fill="#000" font-family="Liberation Sans, sans-serif">0.92275</text><path d="M1386 2 L1395 2 L1390.5 7 Z" fill="#3a3550"/></svg></div>

<!-- title bar icons -->
<svg class="abs" style="left:0;top:0" width="24" height="22" viewBox="0 0 24 22">
 <g stroke="#0d5fa6" stroke-width="1.4">
  <path d="M7.5 4v2.5M9.5 4v2.5M11.5 4v2.5M13.5 4v2.5M6.5 15.5v2.5M8.5 15.5v2.5M10.5 15.5v2.5M12.5 15.5v2.5M3 8.5h2.5M3 10.5h2.5M3 12.5h2.5M3 14.5h2.5M14.5 7.5h2.5M14.5 9.5h2.5M14.5 11.5h2.5M14.5 13.5h2.5"/>
 </g>
 <rect x="5.5" y="6.5" width="9" height="9" fill="#bde2fb" stroke="#0d5fa6" stroke-width="1.4"/>
</svg>
<svg class="abs" style="left:1500px;top:0" width="100" height="22" viewBox="1500 0 100 22">
 <rect x="1508" y="11" width="8" height="2" fill="#1b1b1b"/>
 <g shape-rendering="crispEdges" fill="#1b1b1b">
 <rect x="1533" y="6" width="8" height="2"/><rect x="1533" y="6" width="1" height="8"/><rect x="1540" y="6" width="1" height="8"/><rect x="1533" y="13" width="8" height="1"/>
 <rect x="1535" y="4" width="7" height="1"/><rect x="1542" y="4" width="1" height="8"/>
 </g>
 <rect x="1552" y="0" width="45" height="19" fill="#c75050"/>
 <path d="M1571 6.2L1579 12.8M1579 6.2L1571 12.8" stroke="#fff" stroke-width="1.7"/>
</svg>

<!-- toolbar -->
<div class="abs" style="left:33px;top:46px;width:29px;height:26px;background:#d6e4f2;border-left:1px solid #9a9a9a;border-top:1px solid #9a9a9a"></div>
<svg class="abs" style="left:0;top:44px" width="660" height="30" viewBox="0 44 660 30">
 <g stroke="#00a51c" stroke-width="1.3" fill="none">
  <path d="M11.3 55.2V67.8M8 64.3H11.3M11.3 58.5H15M21.4 51.2V63.7M18 54.3H21.4M21.4 60.6H25"/>
  <rect x="42.6" y="54.6" width="4" height="9.8" fill="#e8fae8" stroke-width="1.2"/><path d="M44.6 52V54M44.6 65V67" stroke-width="1.2"/>
  <rect x="50.6" y="53.6" width="4" height="12" fill="#e8fae8" stroke-width="1.2"/><path d="M52.6 51V53M52.6 66V68" stroke-width="1.2"/>
  <path d="M71.9 62.4H74.4L77.2 57.1L80.3 64.6L84.4 54.6L86.9 59H88.8"/>
 </g>
 <g fill="#8a8a8a"><rect x="98" y="47" width="1.2" height="25"/><rect x="168" y="47" width="1.2" height="25"/><rect x="453" y="47" width="1.2" height="25"/></g>
 <g stroke="#1e6fc0" stroke-width="1.2" fill="#d3e6f6">
  <circle cx="116.3" cy="57.5" r="5.8"/><path d="M120.5 61.8L126.5 67.5" stroke-width="1.5"/><path d="M113 57.5h6.6M116.3 54.2v6.6" fill="none"/>
  <circle cx="148.5" cy="57.5" r="5.8"/><path d="M152.7 61.8L158.7 67.5" stroke-width="1.5"/><path d="M145.2 57.5h6.6" fill="none"/>
 </g>
 <circle cx="188.4" cy="59.4" r="7.9" fill="#c9e2f8" stroke="#2a76c6" stroke-width="1.3"/>
 <path d="M186.3 56.2v6.2M190.5 56.2v6.2" stroke="#1e63b0" stroke-width="1.3"/>
 <circle cx="220.4" cy="59.4" r="7.9" fill="#f9d0d0" stroke="#e05050" stroke-width="1.3"/>
 <rect x="217.3" y="56.6" width="6.2" height="5.8" fill="none" stroke="#d83030" stroke-width="1.2"/>
 <circle cx="252.4" cy="59.4" r="7.9" fill="#d4f2d4" stroke="#22b030" stroke-width="1.3"/>
 <path d="M253 56.3L249.6 59.4L253 62.5ZM256.5 56.3L253.1 59.4L256.5 62.5Z" fill="none" stroke="#1aa020" stroke-width="1.2"/>
 
 <rect x="274.5" y="57.5" width="106" height="3" fill="#e3e3e3" stroke="#d2d2d2" stroke-width="1"/>
 <rect x="322.5" y="52.5" width="5" height="13" fill="#dce8f8" stroke="#6fa3e2" stroke-width="1"/>
 <circle cx="403.5" cy="59.4" r="7.9" fill="#d4f2d4" stroke="#22b030" stroke-width="1.3"/>
 <path d="M399.5 56.3L402.9 59.4L399.5 62.5ZM403 56.3L406.4 59.4L403 62.5Z" fill="none" stroke="#1aa020" stroke-width="1.2"/>
 <circle cx="435.6" cy="59.4" r="7.9" fill="#c9e2f8" stroke="#2a76c6" stroke-width="1.3"/>
 <path d="M432.6 56.3L436.8 59.4L432.6 62.5Z" fill="none" stroke="#1e63b0" stroke-width="1.3"/><path d="M438.6 56v6.8" stroke="#1e63b0" stroke-width="1.3"/>
 <path d="M464 62.5C464 55 476 52.5 479.5 58.5" fill="none" stroke="#2a76c6" stroke-width="1.4"/>
 <path d="M476.5 58.8L480.3 59.2L480.5 55.3" fill="none" stroke="#2a76c6" stroke-width="1.3"/>
 <circle cx="464" cy="64.3" r="1.7" fill="#fff" stroke="#2a76c6" stroke-width="1.2"/>
 <circle cx="471.3" cy="64.3" r="1.5" fill="#fff" stroke="#b0b0b0" stroke-width="1"/>
 <circle cx="478.5" cy="64.3" r="1.7" fill="#fff" stroke="#2a76c6" stroke-width="1.2"/>
 <rect x="529.5" y="50.5" width="123" height="20" fill="#fff" stroke="#a9a9a9" stroke-width="1"/>
 <rect x="626.5" y="54.5" width="9" height="10.5" fill="#e6e6ee" stroke="#7a7a86" stroke-width="1"/>
 <path d="M628 57.5h6M628 59.5h6M628 61.5h6M629.5 56v8M631.5 56v8M633.5 56v8" stroke="#a8a8c0" stroke-width="0.6"/>
 <path d="M639 57.8h7l-3.5 3.6z" fill="#4a5a7a"/>
</svg>
<div class="abs" style="left:268px;top:50px;width:119px;height:21px;border:1px dotted #000"></div>
<div class="tx" style="left:497.50px;top:4.33px;font-size:14.5px;color:#35283a;letter-spacing:-0.011px;">Strategy Tester Visualization : Crazy Cobra EA on USDCHF,H2 from 2015.01.01 to 2025.11.06</div><div class="tx" style="left:11.25px;top:26.54px;font-size:12px;color:#000;letter-spacing:-0.562px;">File</div><div class="tx" style="left:51.25px;top:26.54px;font-size:12px;color:#000;letter-spacing:-0.414px;">View</div><div class="tx" style="left:98.40px;top:26.54px;font-size:12px;color:#000;letter-spacing:-0.348px;">Charts</div><div class="tx" style="left:154.40px;top:26.54px;font-size:12px;color:#000;letter-spacing:-0.215px;">Tester</div><div class="tx" style="left:208.60px;top:26.54px;font-size:12px;color:#000;letter-spacing:-0.160px;">Help</div><div class="tx" style="left:485.00px;top:53.84px;font-size:12px;color:#000;letter-spacing:-0.181px;">Skip to</div><div class="tx" style="left:534.40px;top:54.44px;font-size:12px;color:#000;letter-spacing:-0.595px;">2025.11.20 00:00</div>

<!-- toolbox -->
<div id="box" class="abs"></div>
<div id="panel" class="abs"></div>
<div class="abs" style="left:410px;top:221px;width:1115px;height:20px;background:#ebebeb"></div>
<div class="abs" style="left:410px;top:221px;width:1115px;height:1px;background:#d0d0d0"></div>
<div class="abs" style="left:410px;top:241px;width:1115px;height:1px;background:#d0d0d0"></div>
<div class="abs" style="left:519px;top:178px;width:1px;height:24px;background:#a6a6a6"></div><div class="abs" style="left:519px;top:202px;width:1px;height:59px;background:#d6d6d6"></div><div class="abs" style="left:595px;top:178px;width:1px;height:24px;background:#a6a6a6"></div><div class="abs" style="left:595px;top:202px;width:1px;height:59px;background:#d6d6d6"></div><div class="abs" style="left:705px;top:178px;width:1px;height:24px;background:#a6a6a6"></div><div class="abs" style="left:705px;top:202px;width:1px;height:59px;background:#d6d6d6"></div><div class="abs" style="left:815px;top:178px;width:1px;height:24px;background:#a6a6a6"></div><div class="abs" style="left:815px;top:202px;width:1px;height:59px;background:#d6d6d6"></div><div class="abs" style="left:900px;top:178px;width:1px;height:24px;background:#a6a6a6"></div><div class="abs" style="left:900px;top:202px;width:1px;height:59px;background:#d6d6d6"></div><div class="abs" style="left:985px;top:178px;width:1px;height:24px;background:#a6a6a6"></div><div class="abs" style="left:985px;top:202px;width:1px;height:59px;background:#d6d6d6"></div><div class="abs" style="left:1070px;top:178px;width:1px;height:24px;background:#a6a6a6"></div><div class="abs" style="left:1070px;top:202px;width:1px;height:59px;background:#d6d6d6"></div><div class="abs" style="left:1155px;top:178px;width:1px;height:24px;background:#a6a6a6"></div><div class="abs" style="left:1155px;top:202px;width:1px;height:59px;background:#d6d6d6"></div><div class="abs" style="left:1240px;top:178px;width:1px;height:24px;background:#a6a6a6"></div><div class="abs" style="left:1240px;top:202px;width:1px;height:59px;background:#d6d6d6"></div><div class="abs" style="left:1333px;top:178px;width:1px;height:24px;background:#a6a6a6"></div><div class="abs" style="left:1333px;top:202px;width:1px;height:59px;background:#d6d6d6"></div>
<div class="abs" style="left:410px;top:261px;width:1115px;height:21px;background:#c8c8c8"></div>
<div class="abs" style="left:410px;top:282px;width:1115px;height:1px;background:#fff"></div>
<div class="abs" style="left:410px;top:283px;width:1115px;height:25px;background:#f0f0f0;border-top:1px solid #000"></div>
<div class="abs" style="left:415px;top:283px;width:50px;height:21px;background:#fff;border:1px solid #000;border-top:none;border-bottom:2px solid #000"></div>
<div class="abs" style="left:1495px;top:148px;width:31px;height:20px;background:#c75050"></div>
<svg class="abs" style="left:1495px;top:148px" width="31" height="20" viewBox="0 0 31 20"><path d="M12 7L19.5 14M19.5 7L12 14" stroke="#fff" stroke-width="1.6"/></svg>
<svg class="abs" style="left:400px;top:140px" width="1140" height="180" viewBox="400 140 1140 180">
  <g fill="#fff" stroke-width="1.2">
  <rect x="414.6" y="204.6" width="10" height="13.8" rx="2" stroke="#1c64b0"/>
  <rect x="414.6" y="224.6" width="10" height="13.8" rx="2" stroke="#d83a3a"/>
  <rect x="414.6" y="244.6" width="10" height="13.8" rx="2" stroke="#1c64b0"/>
 </g>
 <g shape-rendering="crispEdges">
 <path d="M419 208.5h3M419 211.5h3" stroke="#1c64b0" stroke-width="1"/>
 <path d="M419 228.5h3M419 231.5h3" stroke="#d83a3a" stroke-width="1"/>
 <path d="M419 248.5h3M419 251.5h3" stroke="#1c64b0" stroke-width="1"/>
 </g>
 <circle cx="419.5" cy="271.5" r="5" fill="none" stroke="#333" stroke-width="1.2"/>
 <path d="M416.5 271.5h6" stroke="#333" stroke-width="1.3"/>
 <path d="M1138 193h7l-3.5 -4z" fill="#000"/>
</svg>
<div class="tx" style="left:940.75px;top:155.03px;font-size:14.5px;color:#3a2a3c;letter-spacing:0.712px;">Toolbox</div><div class="tx" style="left:416.00px;top:183.84px;font-size:12px;color:#000;">Symbol</div><div class="tx" style="left:526.00px;top:183.84px;font-size:12px;color:#000;">Ticket</div><div class="tx" style="left:674.28px;top:183.84px;font-size:12px;color:#000;">Time</div><div class="tx" style="left:784.49px;top:183.84px;font-size:12px;color:#000;">Type</div><div class="tx" style="left:855.48px;top:183.84px;font-size:12px;color:#000;">Volume</div><div class="tx" style="left:953.16px;top:183.84px;font-size:12px;color:#000;">Price</div><div class="tx" style="left:1039.82px;top:183.84px;font-size:12px;color:#000;">S / L</div><div class="tx" style="left:1102.88px;top:183.84px;font-size:12px;color:#000;">T / P</div><div class="tx" style="left:1208.16px;top:183.84px;font-size:12px;color:#000;">Price</div><div class="tx" style="left:1300.49px;top:183.84px;font-size:12px;color:#000;">Profit</div><div class="tx" style="left:1466.99px;top:183.84px;font-size:12px;color:#000;">Comment</div><div class="tx" style="left:431.50px;top:205.84px;font-size:12px;color:#000;">usdchf</div><div class="tx" style="left:523.50px;top:205.84px;font-size:12px;color:#000;letter-spacing:-1.700px;">62</div><div class="tx" style="left:603.81px;top:205.84px;font-size:12px;color:#000;letter-spacing:-0.661px;">2022.12.13 14:00:00</div><div class="tx" style="left:791.65px;top:205.84px;font-size:12px;color:#000;">buy</div><div class="tx" style="left:875.20px;top:205.84px;font-size:12px;color:#000;letter-spacing:-0.850px;">0.02</div><div class="tx" style="left:942.73px;top:205.84px;font-size:12px;color:#000;letter-spacing:-0.850px;">0.92591</div><div class="tx" style="left:1028.73px;top:205.84px;font-size:12px;color:#000;letter-spacing:-0.850px;">0.00000</div><div class="tx" style="left:1113.73px;top:205.84px;font-size:12px;color:#000;letter-spacing:-0.850px;">0.00000</div><div class="tx" style="left:1198.23px;top:205.84px;font-size:12px;color:#000;letter-spacing:-0.850px;">0.92263</div><div class="tx" style="left:1305.09px;top:205.84px;font-size:12px;color:#000;letter-spacing:-0.638px;">-7.11</div><div class="tx" style="left:1417.50px;top:205.84px;font-size:12px;color:#000;letter-spacing:-0.495px;">Crazy Cobra 1 | BUY</div><div class="tx" style="left:431.50px;top:225.84px;font-size:12px;color:#000;">usdchf</div><div class="tx" style="left:523.50px;top:225.84px;font-size:12px;color:#000;letter-spacing:-1.700px;">64</div><div class="tx" style="left:603.81px;top:225.84px;font-size:12px;color:#000;letter-spacing:-0.661px;">2022.12.13 14:22:38</div><div class="tx" style="left:792.99px;top:225.84px;font-size:12px;color:#000;">sell</div><div class="tx" style="left:875.20px;top:225.84px;font-size:12px;color:#000;letter-spacing:-0.850px;">0.01</div><div class="tx" style="left:942.73px;top:225.84px;font-size:12px;color:#000;letter-spacing:-0.850px;">0.92339</div><div class="tx" style="left:1028.73px;top:225.84px;font-size:12px;color:#000;letter-spacing:-0.850px;">0.00000</div><div class="tx" style="left:1113.73px;top:225.84px;font-size:12px;color:#000;letter-spacing:-0.850px;">0.00000</div><div class="tx" style="left:1198.23px;top:225.84px;font-size:12px;color:#000;letter-spacing:-0.850px;">0.92283</div><div class="tx" style="left:1308.20px;top:225.84px;font-size:12px;color:#000;letter-spacing:-0.850px;">0.61</div><div class="tx" style="left:1415.40px;top:225.84px;font-size:12px;color:#000;letter-spacing:-0.605px;">Crazy Cobra 1 | SELL</div><div class="tx" style="left:431.50px;top:245.84px;font-size:12px;color:#000;">usdchf</div><div class="tx" style="left:523.50px;top:245.84px;font-size:12px;color:#000;letter-spacing:-1.700px;">54</div><div class="tx" style="left:603.81px;top:245.84px;font-size:12px;color:#000;letter-spacing:-0.661px;">2022.12.09 13:30:39</div><div class="tx" style="left:791.65px;top:245.84px;font-size:12px;color:#000;">buy</div><div class="tx" style="left:875.20px;top:245.84px;font-size:12px;color:#000;letter-spacing:-0.850px;">0.01</div><div class="tx" style="left:942.73px;top:245.84px;font-size:12px;color:#000;letter-spacing:-0.850px;">0.93731</div><div class="tx" style="left:1028.73px;top:245.84px;font-size:12px;color:#000;letter-spacing:-0.850px;">0.00000</div><div class="tx" style="left:1113.73px;top:245.84px;font-size:12px;color:#000;letter-spacing:-0.850px;">0.93981</div><div class="tx" style="left:1198.23px;top:245.84px;font-size:12px;color:#000;letter-spacing:-0.850px;">0.92263</div><div class="tx" style="left:1298.38px;top:245.84px;font-size:12px;color:#000;letter-spacing:-0.680px;">-15.91</div><div class="tx" style="left:1417.50px;top:245.84px;font-size:12px;color:#000;letter-spacing:-0.495px;">Crazy Cobra 1 | BUY</div><div class="tx" style="left:431.00px;top:265.84px;font-size:12px;color:#000;font-weight:bold;letter-spacing:-0.129px;">Balance: 3 081.38 USD  Equity: 3 058.97  Margin: 3.00  Free Margin: 3 055.97  Margin Level: 101 965.67 %</div><div class="tx" style="left:1296.82px;top:265.84px;font-size:12px;color:#000;font-weight:bold;letter-spacing:-0.368px;">-22.41</div><div class="tx" style="left:425.50px;top:286.84px;font-size:12px;color:#000;letter-spacing:-0.350px;">Trade</div><div class="tx" style="left:475.00px;top:286.84px;font-size:12px;color:#7a7a7a;letter-spacing:0.111px;">History</div><div class="tx" style="left:523.50px;top:286.84px;font-size:12px;color:#7a7a7a;">|</div><div class="tx" style="left:533.00px;top:286.84px;font-size:12px;color:#7a7a7a;letter-spacing:-0.077px;">Operations</div><div class="tx" style="left:601.00px;top:286.84px;font-size:12px;color:#7a7a7a;">|</div><div class="tx" style="left:611.00px;top:286.84px;font-size:12px;color:#7a7a7a;letter-spacing:-0.226px;">Journal</div>
</body></html>
